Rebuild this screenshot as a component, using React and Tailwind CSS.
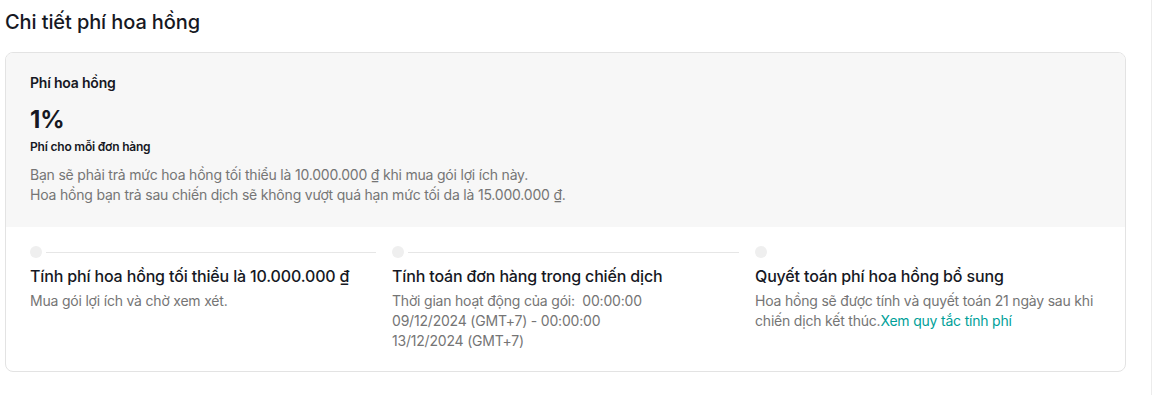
import React from 'react';

const steps = [
  {
    title: 'Tính phí hoa hồng tối thiểu là 10.000.000 ₫',
    body: <>Mua gói lợi ích và chờ xem xét.</>,
    line: true,
  },
  {
    title: 'Tính toán đơn hàng trong chiến dịch',
    body: (
      <>
        Thời gian hoạt động của gói:&nbsp; 00:00:00
        <br />
        09/12/2024 (GMT+7) - 00:00:00
        <br />
        13/12/2024 (GMT+7)
      </>
    ),
    line: true,
  },
  {
    title: 'Quyết toán phí hoa hồng bổ sung',
    body: (
      <>
        Hoa hồng sẽ được tính và quyết toán 21 ngày sau khi chiến dịch kết thúc.
        <span className="text-[#009f99]">Xem quy tắc tính phí</span>
      </>
    ),
    line: false,
  },
];

const App = () => {
  return (
    <div className="min-h-[395px] w-full bg-white font-['Inter','Liberation_Sans',sans-serif] text-[#161823]">
      <div className="mr-[1px] min-h-[395px] border-r border-[#ececec] pl-[5px] pr-[25px] pt-[9px] pb-[23px]">
        <h1 className="text-[20px] leading-[26px] font-medium tracking-[-0.1px]">Chi tiết phí hoa hồng</h1>

        <div className="mt-[17px] overflow-hidden rounded-lg border border-[#e3e3e3]">
          <section className="bg-[#f7f7f7] px-6 pt-[20px] pb-[22px]">
            <p className="text-[14px] leading-[20px] font-semibold tracking-[-0.2px]">Phí hoa hồng</p>
            <p className="mt-[13px] text-[24px] leading-[28px] font-bold">1%</p>
            <p className="mt-[5px] text-[12px] leading-[16px] font-semibold tracking-[-0.2px]">Phí cho mỗi đơn hàng</p>
            <div className="mt-[10px] text-[14px] leading-[20px] tracking-[-0.2px] text-[#757575]">
              <p>Bạn sẽ phải trả mức hoa hồng tối thiểu là 10.000.000 ₫ khi mua gói lợi ích này.</p>
              <p>Hoa hồng bạn trả sau chiến dịch sẽ không vượt quá hạn mức tối da là 15.000.000 ₫.</p>
            </div>
          </section>

          <section className="grid grid-cols-[362px_363px_1fr] px-6 pt-[19px] pb-[20px]">
            {steps.map((step) => (
              <div key={step.title}>
                <div className="flex items-center gap-1 pr-4">
                  <span className="h-3 w-3 shrink-0 rounded-full bg-[#efefef]" />
                  {step.line && <span className="h-px flex-1 bg-[#e6e6e6]" />}
                </div>
                <h3 className="mt-[7px] text-[16px] leading-[22px] font-medium tracking-[-0.15px]">{step.title}</h3>
                <p className="mt-[4px] text-[14px] leading-[20px] tracking-[-0.2px] text-[#757575]">{step.body}</p>
              </div>
            ))}
          </section>
        </div>
      </div>
    </div>
  );
};

export default App;
